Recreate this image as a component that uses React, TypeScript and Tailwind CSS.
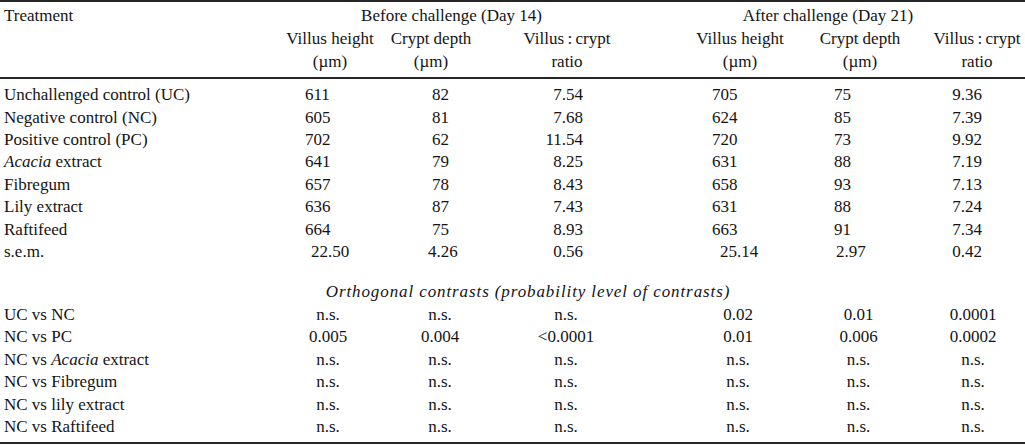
import React from "react";

type Row = [string | React.ReactNode, string, string, string, string, string, string];

const dataRows: Row[] = [
  ["Unchallenged control (UC)", "611", "82", "7.54", "705", "75", "9.36"],
  ["Negative control (NC)", "605", "81", "7.68", "624", "85", "7.39"],
  ["Positive control (PC)", "702", "62", "11.54", "720", "73", "9.92"],
  [<><i>Acacia</i> extract</>, "641", "79", "8.25", "631", "88", "7.19"],
  ["Fibregum", "657", "78", "8.43", "658", "93", "7.13"],
  ["Lily extract", "636", "87", "7.43", "631", "88", "7.24"],
  ["Raftifeed", "664", "75", "8.93", "663", "91", "7.34"],
];

const semRow: Row = ["s.e.m.", "22.50", "4.26", "0.56", "25.14", "2.97", "0.42"];

const contrastRows: Row[] = [
  ["UC vs NC", "n.s.", "n.s.", "n.s.", "0.02", "0.01", "0.0001"],
  ["NC vs PC", "0.005", "0.004", "<0.0001", "0.01", "0.006", "0.0002"],
  [<>NC vs <i>Acacia</i> extract</>, "n.s.", "n.s.", "n.s.", "n.s.", "n.s.", "n.s."],
  ["NC vs Fibregum", "n.s.", "n.s.", "n.s.", "n.s.", "n.s.", "n.s."],
  ["NC vs lily extract", "n.s.", "n.s.", "n.s.", "n.s.", "n.s.", "n.s."],
  ["NC vs Raftifeed", "n.s.", "n.s.", "n.s.", "n.s.", "n.s.", "n.s."],
];

// column placement of values (columns: 276 | 104 | 120 | 153 | 147 | 117 | 108)
const dataCls = ["pl-[29px]", "pl-[52px]", "pr-[70px] text-right", "pl-[59px]", "pl-[34px]", "pr-[43px] text-right"];
const semCls = ["pl-[35px]", "pl-[48px]", "pr-[70px] text-right", "pl-[67px]", "pl-[36px]", "pr-[43px] text-right"];
const contrastCls = ["text-center", "text-center", "text-center pr-[21px]", "text-center pl-[23px]", "text-center", "text-center pl-[4px]"];
const headCls = ["text-center pl-[4px]", "text-center pr-[18px]", "text-center pr-[19px]", "text-center pl-[27px]", "text-center pl-[3px]", "text-center pl-[12px]"];

const GRID = "grid grid-cols-[276px_104px_120px_153px_147px_117px_108px]";

function TableRow({ row, cls }: { row: Row; cls: string[] }) {
  return (
    <div className={GRID}>
      <div className="pl-[4px] whitespace-nowrap">{row[0]}</div>
      {row.slice(1).map((v, i) => (
        <div key={i} className={`whitespace-nowrap ${cls[i]}`}>
          {v as string}
        </div>
      ))}
    </div>
  );
}

export default function App() {
  const heads = ["Villus height", "Crypt depth", "Villus\u2009:\u2009crypt", "Villus height", "Crypt depth", "Villus\u2009:\u2009crypt"];
  const units = ["(µm)", "(µm)", "ratio", "(µm)", "(µm)", "ratio"];

  return (
    <div className="w-[1025px] h-[447px] bg-white text-[#141414] font-['Liberation_Serif','Times_New_Roman',serif] text-[17px] leading-[22.4px]">
      <div className="border-t-[2px] border-b-[2px] border-[#262626] pt-[3px] pb-[4px]">
        <div className={GRID}>
          <div className="pl-[4px]">Treatment</div>
          <div className="col-span-3 text-center pr-[26px] whitespace-nowrap">Before challenge (Day 14)</div>
          <div className="col-span-3 text-center pr-[22px] whitespace-nowrap">After challenge (Day 21)</div>
        </div>
        <div className={`${GRID} mt-[1px]`}>
          <div />
          {heads.map((h, i) => (
            <div key={i} className={`whitespace-nowrap ${headCls[i]}`}>{h}</div>
          ))}
        </div>
        <div className={GRID}>
          <div />
          {units.map((h, i) => (
            <div key={i} className={`whitespace-nowrap ${headCls[i]}`}>{h}</div>
          ))}
        </div>
      </div>

      <div className="border-b-[2px] border-[#262626] pt-[5px] pb-[4px]">
        {dataRows.map((r, i) => (
          <TableRow key={i} row={r} cls={dataCls} />
        ))}
        <TableRow row={semRow} cls={semCls} />

        <div className={`${GRID} mt-[18px]`}>
          <div />
          <div className="col-span-4 text-center pr-[20px] italic tracking-[0.9px] whitespace-nowrap">
            Orthogonal contrasts (probability level of contrasts)
          </div>
        </div>
        {contrastRows.map((r, i) => (
          <TableRow key={i} row={r} cls={contrastCls} />
        ))}
      </div>
    </div>
  );
}
